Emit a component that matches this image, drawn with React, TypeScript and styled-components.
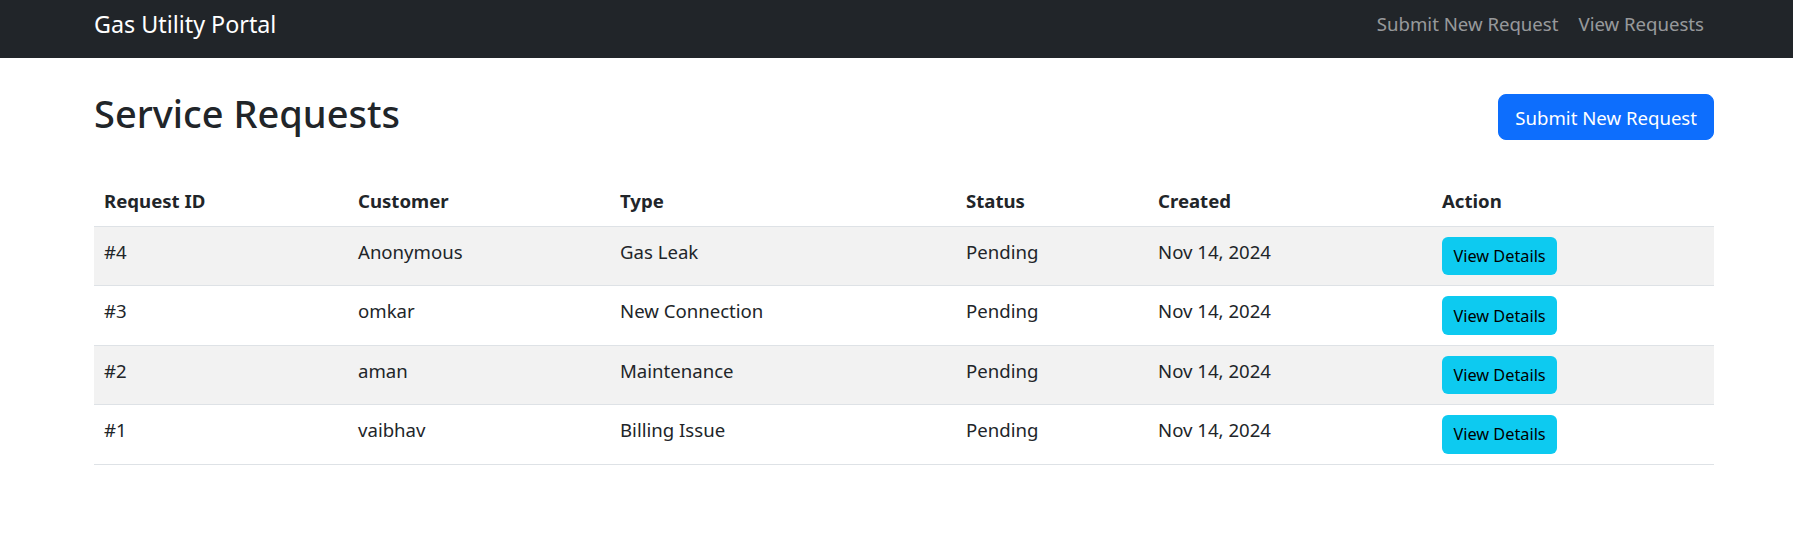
import * as React from "react";
import styled, { createGlobalStyle } from "styled-components";

const GlobalStyle = createGlobalStyle`
    body {
        margin: 0;
        background: #fff;
        color: #212529;
        font-family: "Noto Sans", "Open Sans", sans-serif;
    }
`;

const Navbar = styled.nav`
    height: 58px;
    background: #212529;
`;

const NavInner = styled.div`
    display: flex;
    align-items: center;
    justify-content: space-between;
    height: 100%;
    box-sizing: border-box;
    padding: 0 79px 11px 94px;
`;

const Brand = styled.a`
    color: #fff;
    font-size: 23.3px;
    line-height: 36px;
    text-decoration: none;
`;

const NavLinks = styled.div`
    display: flex;
`;

const NavLink = styled.a`
    padding: 0 10px;
    color: rgba(255, 255, 255, 0.55);
    font-size: 18.6px;
    line-height: 30px;
    text-decoration: none;
`;

const Container = styled.main`
    padding: 30px 79px 0 94px;
`;

const HeaderRow = styled.div`
    display: flex;
    align-items: center;
    justify-content: space-between;
    margin-bottom: 30px;
`;

const Title = styled.h2`
    margin: 0 0 10px;
    padding-top: 1px;
    height: 47px;
    font-size: 38px;
    line-height: 48px;
    font-weight: 500;
`;

const PrimaryButton = styled.button`
    height: 46px;
    padding: 0 16px;
    border: 1px solid #0d6efd;
    border-radius: 8px;
    background: #0d6efd;
    color: #fff;
    font-family: inherit;
    font-size: 18.6px;
    cursor: pointer;
`;

const Table = styled.table`
    width: 100%;
    table-layout: fixed;
    border-collapse: collapse;
    font-size: 18.6px;

    & th, & td {
        padding: 10px;
        line-height: 30px;
        text-align: left;
        vertical-align: top;
        border-bottom: 1px solid #dee2e6;
    }

    & th {
        font-weight: 700;
    }
`;

const Row = styled.tr<{ $striped?: boolean }>`
    background: ${props => (props.$striped ? "#f2f2f2" : "#fff")};
`;

const InfoButton = styled.button`
    display: block;
    height: 38.4px;
    padding: 0 11.5px;
    border: none;
    border-radius: 6px;
    background: #0dcaf0;
    color: #000;
    font-family: inherit;
    font-size: 16.3px;
    cursor: pointer;
`;

const columns = [
    { label: "Request ID", width: 254 },
    { label: "Customer", width: 262 },
    { label: "Type", width: 346 },
    { label: "Status", width: 192 },
    { label: "Created", width: 284 },
    { label: "Action", width: 282 },
];

const requests = [
    { id: 4, customer: "Anonymous", type: "Gas Leak", status: "Pending", created: "Nov 14, 2024" },
    { id: 3, customer: "omkar", type: "New Connection", status: "Pending", created: "Nov 14, 2024" },
    { id: 2, customer: "aman", type: "Maintenance", status: "Pending", created: "Nov 14, 2024" },
    { id: 1, customer: "vaibhav", type: "Billing Issue", status: "Pending", created: "Nov 14, 2024" },
];

const App: React.FunctionComponent = () => {
    return (
        <>
            <GlobalStyle />
            <Navbar>
                <NavInner>
                    <Brand href="#">Gas Utility Portal</Brand>
                    <NavLinks>
                        <NavLink href="#">Submit New Request</NavLink>
                        <NavLink href="#">View Requests</NavLink>
                    </NavLinks>
                </NavInner>
            </Navbar>
            <Container>
                <HeaderRow>
                    <Title>Service Requests</Title>
                    <PrimaryButton>Submit New Request</PrimaryButton>
                </HeaderRow>
                <Table>
                    <colgroup>
                        {columns.map(c => <col key={c.label} style={{ width: c.width }} />)}
                    </colgroup>
                    <thead>
                        <tr>
                            {columns.map(c => <th key={c.label}>{c.label}</th>)}
                        </tr>
                    </thead>
                    <tbody>
                        {requests.map((r, i) => (
                            <Row key={r.id} $striped={i % 2 === 0}>
                                <td>#{r.id}</td>
                                <td>{r.customer}</td>
                                <td>{r.type}</td>
                                <td>{r.status}</td>
                                <td>{r.created}</td>
                                <td><InfoButton>View Details</InfoButton></td>
                            </Row>
                        ))}
                    </tbody>
                </Table>
            </Container>
        </>
    );
};

export default App;
